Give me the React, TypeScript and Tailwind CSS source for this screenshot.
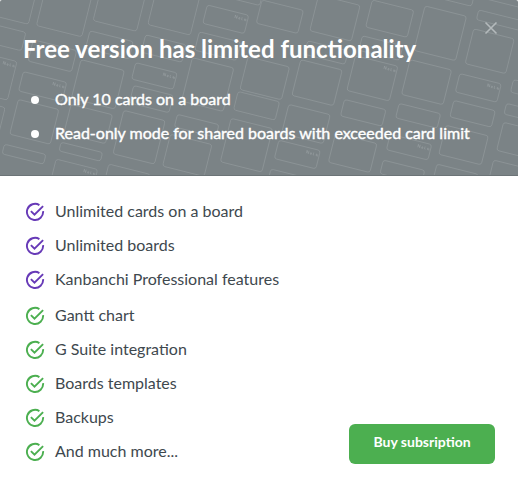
type Card = [x: number, y: number, w: number, h: number, note?: boolean];

const CARDS: Card[] = [
  [-6, -25, 44, 40], [46, -18, 47, 45], [103, -23, 45, 45], [158, -19, 44, 45],
  [207, 5, 43, 19, true], [224, -25, 42, 21], [-22, 21, 48, 19], [89, 31, 45, 18],
  [32, 40, 45, 22], [-28, 51, 45, 40, true], [22, 72, 45, 20, true], [80, 60, 45, 40],
  [135, 63, 43, 17, true], [192, 58, 43, 45], [145, 35, 42, 18], [199, 32, 43, 19],
  [248, 57, 43, 34], [262, 0, 43, 24], [319, -5, 43, 37], [373, 0, 43, 28],
  [438, -24, 41, 21], [426, 6, 43, 46], [480, 10, 45, 10], [475, 29, 42, 36],
  [490, -22, 44, 21], [363, 36, 42, 15], [308, 41, 42, 14], [301, 60, 43, 37],
  [356, 56, 44, 36, true], [411, 60, 43, 36], [461, 74, 43, 19, true], [515, 80, 43, 13],
  [238, 92, 43, 19], [289, 105, 43, 30], [279, 141, 43, 19, true], [345, 100, 43, 17],
  [400, 104, 43, 15], [455, 101, 43, 17], [508, 104, 43, 11], [505, 123, 43, 29],
  [336, 134, 43, 30], [391, 135, 43, 16, true], [447, 126, 44, 30], [384, 161, 43, 14],
  [438, 165, 43, 20], [495, 161, 43, 20], [271, 170, 43, 20], [17, 100, 42, 36],
  [3, 145, 43, 10], [60, 143, 43, 9], [55, 160, 43, 30, true], [108, 165, 43, 20],
  [123, 111, 43, 45], [70, 105, 43, 30], [177, 115, 43, 13], [170, 135, 43, 33],
  [231, 119, 43, 45], [133, 86, 41, 18], [-37, 98, 42, 32], [-47, 155, 42, 30],
];

const FEATURES = [
  { label: "Unlimited cards on a board", purple: true },
  { label: "Unlimited boards", purple: true },
  { label: "Kanbanchi Professional features", purple: true },
  { label: "Gantt chart", purple: false },
  { label: "G Suite integration", purple: false },
  { label: "Boards templates", purple: false },
  { label: "Backups", purple: false },
  { label: "And much more...", purple: false },
];

function CardPattern() {
  return (
    <svg className="absolute inset-0 h-full w-full" viewBox="0 0 518 176" fill="none" stroke="#a1a8aa" strokeOpacity="0.5" strokeWidth="0.8" aria-hidden="true">
      {CARDS.map(([x, y, w, h, note], i) => (
        <g key={i} transform={`translate(${x} ${y}) rotate(14)`}>
          <rect width={w} height={h} rx="2.5" />
          {note && <path d={`M${w - 13} 6v-3l2 3v-3m2 1.5h1v1.5h-1zm3-1v2.500h1m2-2v2h2m-2-1h2`} />}
        </g>
      ))}
    </svg>
  );
}

function CheckIcon({ purple }: { purple: boolean }) {
  return (
    <svg className={`size-5 shrink-0 ${purple ? "text-[#673ab7]" : "text-[#4caf50]"}`} viewBox="0 0 20 20" fill="none" stroke="currentColor" strokeWidth="1.9" aria-hidden="true">
      <path d="M14.4 3.1A8.1 8.1 0 1 0 18.100 9.200" />
      <path d="M5.900 9.100 9.500 12.700 18.100 4.100" />
    </svg>
  );
}

export default function App() {
  return (
    <main className="flex h-[485px] w-[518px] flex-col overflow-hidden bg-white font-[Lato,sans-serif]">
      <header className="relative h-[176px] overflow-hidden rounded-t-[2px] border-b border-[#6c7477] bg-[#7b8386] text-white">
        <CardPattern />
        <div className="relative pl-[23px] pt-[33px]">
          <h1 className="text-[24px] font-bold leading-8 whitespace-nowrap">Free version has limited functionality</h1>
          <ul className="mt-[18px] text-[16px]">
            {["Only 10 cards on a board", "Read-only mode for shared boards with exceeded card limit"].map((t) => (
              <li key={t} className="flex h-[34px] items-center whitespace-nowrap">
                <span className="ml-2 mr-4 size-2 rounded-full bg-white" />
                <span className="pb-[2px] [-webkit-text-stroke:0.4px_white]">{t}</span>
              </li>
            ))}
          </ul>
        </div>
        <button aria-label="Close" className="absolute left-[484px] top-[21px] size-[14px] text-[#b4babc]">
          <svg viewBox="0 0 14 14" fill="none" stroke="currentColor" strokeWidth="1.6"><path d="M1.500 1.500 12.500 12.500M12.500 1.500 1.500 12.500" /></svg>
        </button>
      </header>
      <section className="flex flex-1 justify-between pl-[25px] pr-[23px] pt-[19px]">
        <ul className="text-[16px] text-[#3e484e]">
          {FEATURES.map(({ label, purple }, i) => (
            <li key={label} className={`flex h-[34px] items-center gap-[10px] whitespace-nowrap ${i === 3 ? "mt-[2px]" : ""}`}>
              <CheckIcon purple={purple} />
              <span className="pb-[2px]">{label}</span>
            </li>
          ))}
        </ul>
        <button className="mb-[21px] h-10 w-[146px] self-end rounded-[6px] bg-[#4caf50] pb-[5px] text-[14px] font-bold text-white">Buy subsription</button>
      </section>
    </main>
  );
}
